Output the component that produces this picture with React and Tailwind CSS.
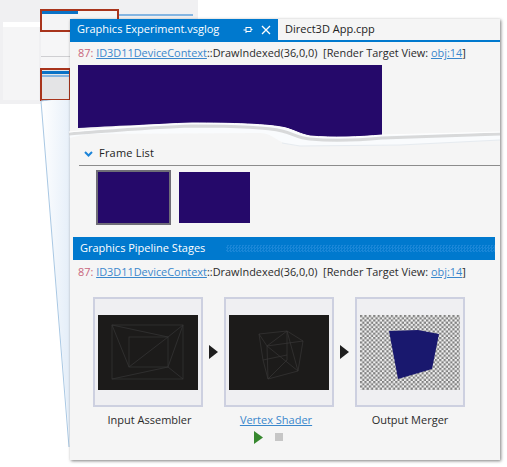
const linkCls = "text-[#3a87cc] underline";

function InfoRow() {
  return (
    <div className="flex h-[23px] items-center whitespace-pre pl-[8px] text-[10.9px] text-[#2b2b2b]">
      <span className="text-[#c8667c]">87: </span>
      <span className={linkCls}>ID3D11DeviceContext</span>
      <span>::DrawIndexed(36,0,0)  [Render Target View: </span>
      <span className={linkCls}>obj:14</span>
      <span>]</span>
    </div>
  );
}

function Arrow() {
  return (
    <svg width="9" height="14" viewBox="0 0 9 14" className="mx-[6px]">
      <path d="M0 0 L9 7 L0 14 Z" fill="#1e1e1e" />
    </svg>
  );
}

function StageBox({ children }) {
  return (
    <div className="flex h-[110px] w-[110px] items-center justify-center border-2 border-[#cdd0e0] bg-[#efeff2] pt-[1px]">
      {children}
    </div>
  );
}

function WireA() {
  return (
    <svg width="100" height="75" viewBox="0 0 100 75" className="bg-[#1c1b1a]">
      <g fill="none" stroke="#343333" strokeWidth="0.8">
        <rect x="14" y="10" width="71" height="54" />
        <rect x="31" y="22" width="39" height="30" />
        <path d="M14 10 L70 22 M14 10 L31 52 M85 10 L70 22 M85 10 L70 52 M31 52 L70 22 M14 64 L70 52 M85 64 L70 52" />
      </g>
    </svg>
  );
}

function WireB() {
  return (
    <svg width="100" height="75" viewBox="0 0 100 75" className="bg-[#1c1b1a]">
      <g fill="none" stroke="#383737" strokeWidth="0.7">
        <path d="M30 19 L58 16 L74 26 L69 56 L39 64 L34 45 Z" />
        <path d="M30 19 L38 31 L74 26 M38 31 L39 64 M38 31 L58 16 L58 45 L39 64 M34 45 L58 40 M38 31 L69 56 M58 16 L69 56" />
      </g>
    </svg>
  );
}

function Checker() {
  return (
    <svg width="100" height="75" viewBox="0 0 100 75">
      <defs>
        <pattern id="chk" width="4.4" height="4.4" patternUnits="userSpaceOnUse">
          <rect width="4.4" height="4.4" fill="#f0f0f0" />
          <rect width="2.2" height="2.2" fill="#808080" />
          <rect x="2.2" y="2.2" width="2.2" height="2.2" fill="#808080" />
        </pattern>
      </defs>
      <rect width="100" height="75" fill="url(#chk)" />
      <path d="M29 16 L58 15 L79 19 L72 54 L38 64 Z" fill="#19186e" />
    </svg>
  );
}

export default function App() {
  return (
    <div className="relative h-[467px] w-[507px] overflow-hidden bg-white font-['Open_Sans','Noto_Sans',sans-serif]">
      {/* faded ide window behind */}
      <div className="absolute left-0 top-0 h-[104px] w-[198px] bg-[#f0f0f2]">
        <div className="ml-[3px] mt-[22px] h-[5px] w-[38px] bg-white" />
        <div className="ml-[3px] h-[73px] w-[36px] bg-[#f5f5f6]" />
      </div>
      <div className="absolute left-[41px] top-[32px] h-[36px] w-[30px] bg-[#f6f6f7]">
        <div className="mt-[24px] h-[1px] bg-[#cfcfd2]" />
      </div>
      <div className="absolute left-[40px] top-[9px] h-[23px] w-[79px] border-2 border-[#a8341c] bg-[#f4f4f5]">
        <div className="h-[3px] w-[36px] bg-[#0a72c6]" />
      </div>
      <div className="absolute left-[119px] top-[14px] h-[2px] w-[74px] bg-[#84b5e2]" />
      <div className="absolute left-[40px] top-[68px] h-[33px] w-[31px] border-2 border-[#a8341c] bg-[#e4e4e6]">
        <div className="mt-[1px] h-[3px] bg-[#0a72c6]" />
        <div className="mt-[1px] h-[2px] bg-[#84b5e2]" />
      </div>
      <svg width="70" height="367" viewBox="0 0 70 367" className="absolute left-0 top-[100px]">
        <defs>
          <linearGradient id="fade" x1="0" y1="0" x2="1" y2="0.3">
            <stop offset="0" stopColor="#ffffff" />
            <stop offset="1" stopColor="#e6eff9" />
          </linearGradient>
        </defs>
        <path d="M41 1 L70 -3 L70 347 Z" fill="url(#fade)" />
        <path d="M41 1 L69 347 M41 1 L70 -3" stroke="#a9c8e4" strokeWidth="1" fill="none" />
      </svg>

      {/* main panel */}
      <div className="absolute left-[70px] top-[19px] flex h-[441px] w-[430px] flex-col bg-[#f5f5f5] shadow-[1px_1px_3px_rgba(0,0,0,0.5)]">
        <div className="flex h-[23px] shrink-0 whitespace-nowrap border-b-2 border-[#0079ce] text-[11px]">
          <div className="flex w-[208px] shrink-0 items-center bg-[#0079ce] pl-[7px] text-white">
            <span>Graphics Experiment.vsglog</span>
            <svg width="10" height="10" viewBox="0 0 10 10" className="ml-[24px]">
              <path d="M0.5 5 H3 M3 2 V8 M3 2.5 H8 V6.5 H3 M8 4.5 H9.5" stroke="#fff" fill="none" />
            </svg>
            <svg width="10" height="10" viewBox="0 0 10 10" className="ml-[8px]">
              <path d="M1 1 L9 9 M9 1 L1 9" stroke="#fff" strokeWidth="1.3" />
            </svg>
          </div>
          <div className="flex items-center pl-[7px] text-[#222]">Direct3D App.cpp</div>
        </div>
        <InfoRow />
        <div className="ml-[8px] h-[54px] w-[304px] shrink-0 bg-[#25096a]" />

        {/* torn edge */}
        <svg width="430" height="23" viewBox="0 0 430 23" className="block shrink-0 overflow-visible">
          <path d="M8 0 H312 V16 C290 18 262 19 240 17 C230 15 226 12 216 9 C200 5 160 4 122 4 C90 5 40 7 8 9 Z" fill="#25096a" />
          <path d="M-1 13 C40 9 85 5 122 4 C160 4 200 5 216 9 C226 12 230 15 240 17 C262 19 290 18 312 16 L430 13 V21 L330 26 L230 27 C218 26 212 24 203 18 C198 15 195 14 190 14 L20 15 C10 16 5 18 0 19 Z" fill="#f9fbfd" />
          <path d="M-1 15 C40 12 85 8 122 7 C160 7 196 8 212 12 C224 15 228 19 240 20 C262 22 290 21 312 19 L430 15" fill="none" stroke="#8a8a8a" strokeOpacity="0.3" strokeWidth="3" />
          <path d="M-1 13 C40 9 85 5 122 4 C160 4 200 5 216 9 C226 12 230 15 240 17 C262 19 290 18 312 16 L430 13" fill="none" stroke="#ffffff" strokeWidth="1" />
          <path d="M212 24 L230 27 L330 26 L430 21" fill="none" stroke="#e6ebf0" strokeWidth="1" />
        </svg>

        <div className="flex h-[23px] shrink-0 items-center pl-[14px] text-[11px] tracking-[0.2px] text-[#222]">
          <svg width="9" height="6" viewBox="0 0 9 6">
            <path d="M1 1 L4.5 4.5 L8 1" fill="none" stroke="#1c84d8" strokeWidth="2" />
          </svg>
          <span className="ml-[6px]">Frame List</span>
        </div>
        <div className="ml-[9px] h-[1px] shrink-0 bg-[#8c8c8c]" />
        <div className="ml-[26px] mt-[4px] flex shrink-0 items-center gap-[8px]">
          <div className="h-[55px] w-[75px] border-2 border-[#6f6d77] bg-[#25096a]" />
          <div className="h-[51px] w-[71px] bg-[#25096a]" />
        </div>
        <div className="ml-[3px] mr-[5px] mt-[12px] flex h-[23px] shrink-0 items-center justify-between bg-[#0079ce] pl-[7px] text-[11px] font-medium text-white">
          <span>Graphics Pipeline Stages</span>
          <div className="h-[7px] w-[269px] bg-[repeating-conic-gradient(#1a87d8_0_25%,#0079ce_0_50%)] bg-[length:3px_3px]" />
        </div>
        <div className="mt-[1px]">
          <InfoRow />
        </div>

        <div className="ml-[23px] mt-[13px] flex items-center">
          <StageBox><WireA /></StageBox>
          <Arrow />
          <StageBox><WireB /></StageBox>
          <Arrow />
          <StageBox><Checker /></StageBox>
        </div>
        <div className="ml-[23px] mt-[5px] flex text-center text-[11px] text-[#2b2b2b]">
          <div className="w-[110px] pl-[3px]">Input Assembler</div>
          <div className="ml-[21px] w-[110px] pr-[6px] text-[#3a87cc] underline">Vertex Shader</div>
          <div className="ml-[21px] w-[110px]">Output Merger</div>
        </div>
        <div className="ml-[184px] mt-[2px] flex items-center gap-[12px]">
          <svg width="9" height="13" viewBox="0 0 9 13">
            <path d="M0 0 L9 6.5 L0 13 Z" fill="#37882f" />
          </svg>
          <div className="h-[8px] w-[8px] bg-[#c6c6c6]" />
        </div>
      </div>
    </div>
  );
}
